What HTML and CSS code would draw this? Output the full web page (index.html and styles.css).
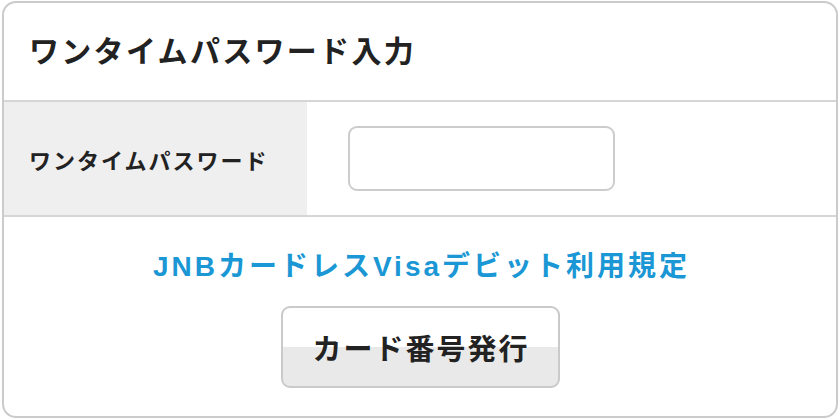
FILE: index.html
```html
<!DOCTYPE html>
<html lang="ja">
<head>
<meta charset="utf-8">
<title>ワンタイムパスワード入力</title>
<link rel="stylesheet" href="styles.css">
</head>
<body>
<div class="card">
  <div class="card-header">
    <h1 class="title">ワンタイムパスワード入力</h1>
  </div>
  <div class="form-row">
    <div class="form-label">ワンタイムパスワード</div>
    <div class="form-field">
      <input class="text-input" type="text" aria-label="ワンタイムパスワード">
    </div>
  </div>
  <div class="card-footer">
    <a class="terms-link" href="#">JNBカードレスVisaデビット利用規定</a>
    <button class="issue-button" type="button">カード番号発行</button>
  </div>
</div>
</body>
</html>
```

FILE: styles.css
```css
html, body {
  margin: 0;
  padding: 0;
  background: #ffffff;
}

body {
  font-family: "Liberation Sans", "Noto Sans CJK JP", sans-serif;
  color: #222222;
}

.card {
  box-sizing: border-box;
  width: 836px;
  height: 417px;
  margin: 1px 2px;
  border: 2px solid #cbcbcb;
  border-radius: 14px;
  background: #ffffff;
  display: flex;
  flex-direction: column;
  overflow: hidden;
}

.card-header {
  height: 97px;
  border-bottom: 2px solid #d6d6d6;
  display: flex;
  align-items: center;
  padding-left: 25px;
}

.title {
  margin: 0;
  font-size: 30px;
  font-weight: 700;
  letter-spacing: 2.3px;
  line-height: 1;
}

.form-row {
  height: 113px;
  border-bottom: 2px solid #d6d6d6;
  display: flex;
}

.form-label {
  box-sizing: border-box;
  width: 303px;
  background: #efefef;
  display: flex;
  align-items: center;
  padding-left: 25px;
  font-size: 22px;
  font-weight: 700;
  letter-spacing: 2px;
}

.form-field {
  display: flex;
  align-items: center;
  padding-left: 41px;
}

.text-input {
  box-sizing: border-box;
  width: 267px;
  height: 65px;
  border: 2px solid #cccccc;
  border-radius: 9px;
  background: #ffffff;
  margin: 0;
  padding: 0 12px;
  outline: none;
  font-family: inherit;
  font-size: 22px;
}

.card-footer {
  flex: 1;
  display: flex;
  flex-direction: column;
  align-items: center;
  padding-top: 33px;
}

.terms-link {
  color: #1a97d4;
  text-decoration: none;
  font-size: 28px;
  font-weight: 700;
  line-height: 34px;
  letter-spacing: 3px;
  margin-right: -3px;
}

.issue-button {
  box-sizing: border-box;
  margin-top: 22px;
  width: 279px;
  height: 82px;
  border: 2px solid #cacaca;
  border-radius: 9px;
  background: linear-gradient(#ffffff 0%, #ffffff 50%, #e9e9e9 50%, #e9e9e9 100%);
  font-family: inherit;
  font-size: 29px;
  font-weight: 700;
  color: #222222;
  letter-spacing: 2px;
  padding: 0 0 0 2px;
  cursor: pointer;
}
```
